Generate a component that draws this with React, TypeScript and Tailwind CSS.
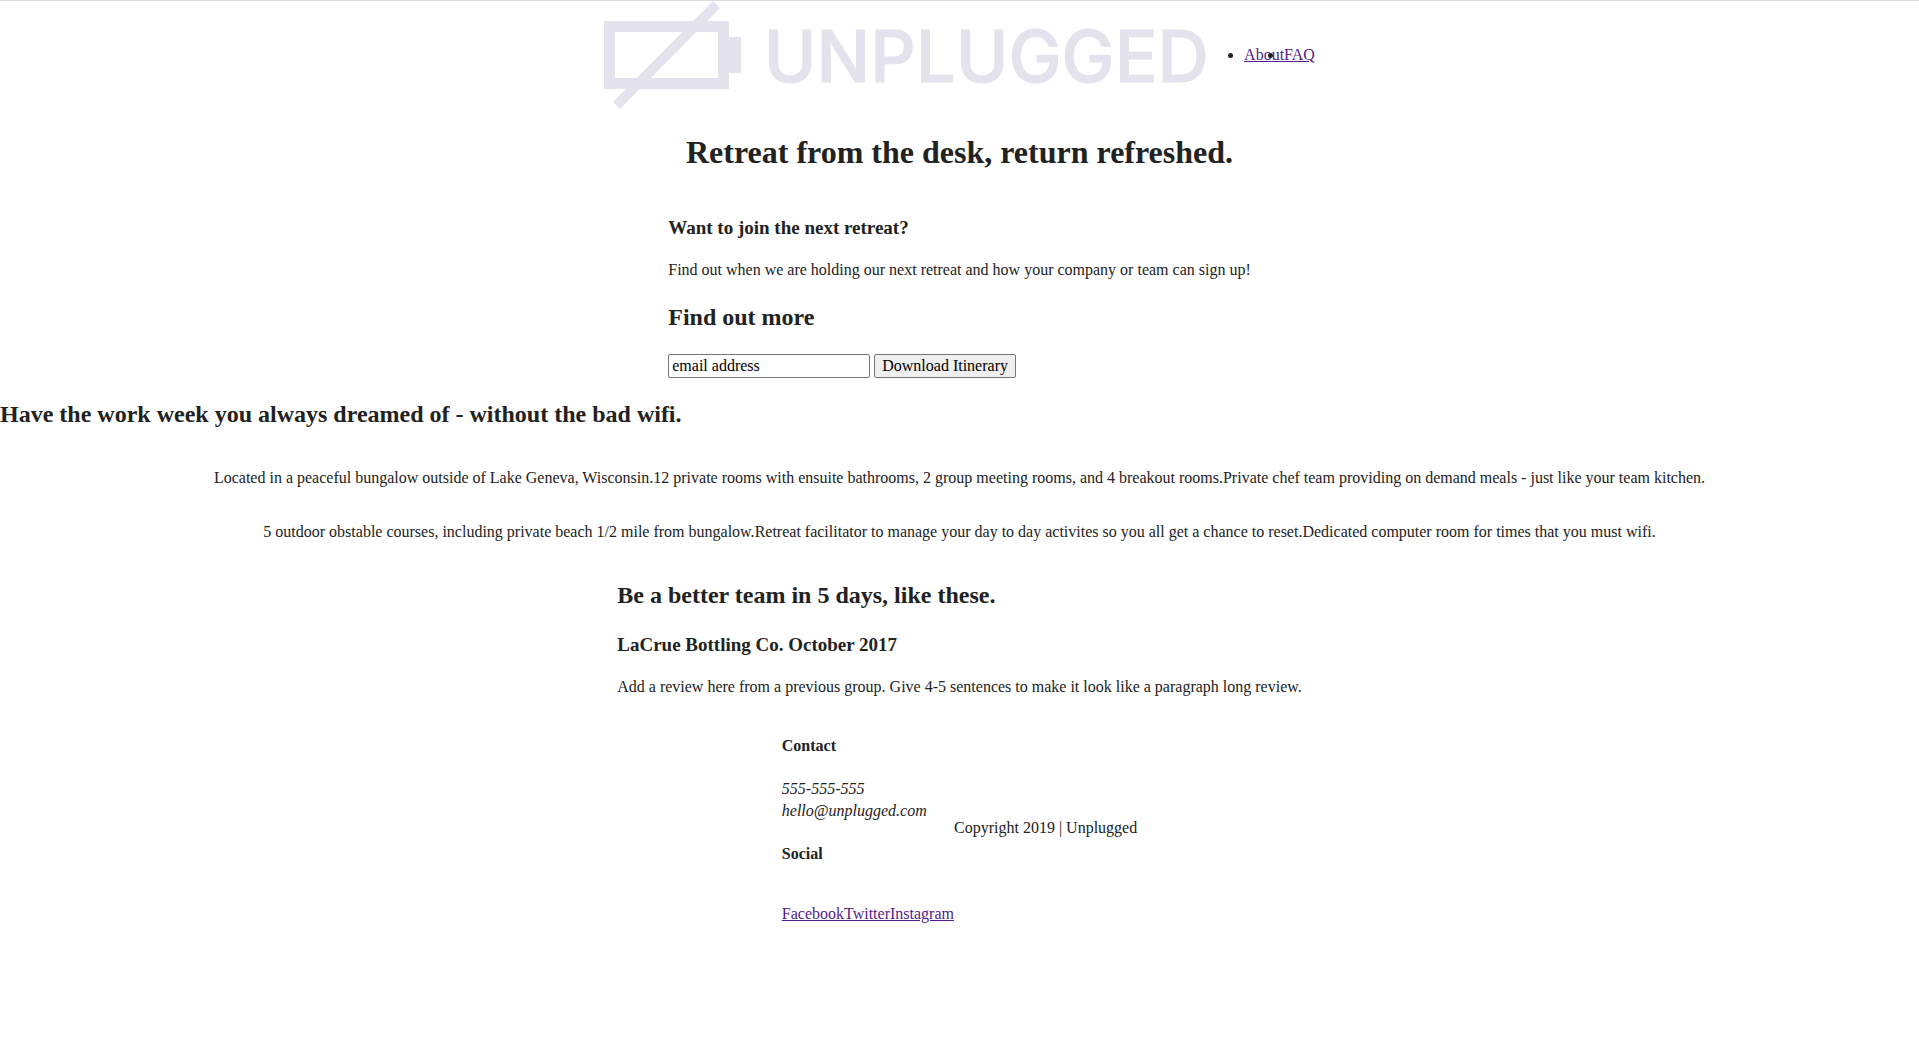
const navLinks = ["About", "FAQ"];

const featureRows = [
  [
    "Located in a peaceful bungalow outside of Lake Geneva, Wisconsin.",
    "12 private rooms with ensuite bathrooms, 2 group meeting rooms, and 4 breakout rooms.",
    "Private chef team providing on demand meals - just like your team kitchen.",
  ],
  [
    "5 outdoor obstable courses, including private beach 1/2 mile from bungalow.",
    "Retreat facilitator to manage your day to day activites so you all get a chance to reset.",
    "Dedicated computer room for times that you must wifi.",
  ],
];

const socialLinks = ["Facebook", "Twitter", "Instagram"];

function Logo() {
  return (
    <svg
      role="img"
      aria-label="Unplugged"
      viewBox="0 0 600 108"
      className="h-[108px] w-[600px] shrink-0 overflow-visible fill-[#e3e2ed]"
    >
      <path fillRule="evenodd" d="M0 20H125V36H137V72H125V88H0ZM11 31V77H114V31Z" />
      <path d="M109 0L116 7L16 108L9 101Z" />
      <text
        x="160"
        y="81"
        className="stroke-[#e3e2ed] stroke-1 font-['Inter',sans-serif] text-[71px] font-medium"
      >
        UNPLUGGED
      </text>
    </svg>
  );
}

function Header() {
  return (
    <header className="flex items-center justify-center">
      <Logo />
      <nav>
        <ul className="my-4 flex list-disc pl-10">
          {navLinks.map((label) => (
            <li key={label}>
              <a href="#" className="text-[#551a8b] underline">
                {label}
              </a>
            </li>
          ))}
        </ul>
      </nav>
    </header>
  );
}

function SignUp() {
  return (
    <section className="flex justify-center">
      <div>
        <h3 className="mt-[19px] text-[19px] leading-[26px] font-bold">
          Want to join the next retreat?
        </h3>
        <p className="mt-[18px]">
          Find out when we are holding our next retreat and how your company or team can sign up!
        </p>
        <h2 className="my-5 text-2xl leading-[33px] font-bold">Find out more</h2>
        <form className="flex gap-1 text-black" onSubmit={(e) => e.preventDefault()}>
          <input
            type="text"
            aria-label="email address"
            defaultValue="email address"
            className="h-6 w-[202px] rounded-xs border border-[#767676] bg-white px-[3px]"
          />
          <button
            type="submit"
            className="h-6 rounded-xs border border-[#767676] bg-[#efefef] px-[7px] leading-[22px]"
          >
            Download Itinerary
          </button>
        </form>
      </div>
    </section>
  );
}

function Features() {
  return (
    <section>
      <h2 className="my-5 text-2xl leading-[33px] font-bold">
        Have the work week you always dreamed of - without the bad wifi.
      </h2>
      <div className="flex flex-col gap-8 py-4">
        {featureRows.map((row) => (
          <ul key={row[0]} className="flex flex-wrap justify-center">
            {row.map((item) => (
              <li key={item}>{item}</li>
            ))}
          </ul>
        ))}
      </div>
    </section>
  );
}

function Reviews() {
  return (
    <section className="flex justify-center">
      <div>
        <h2 className="my-5 text-2xl leading-[33px] font-bold">
          Be a better team in 5 days, like these.
        </h2>
        <h3 className="mb-[18px] text-[19px] leading-[26px] font-bold">
          LaCrue Bottling Co. October 2017
        </h3>
        <p className="mb-4">
          Add a review here from a previous group. Give 4-5 sentences to make it look like a
          paragraph long review.
        </p>
      </div>
    </section>
  );
}

function Footer() {
  return (
    <footer className="flex items-center justify-center">
      <div>
        <h4 className="my-[21px] font-bold">Contact</h4>
        <address>
          555-555-555
          <br />
          hello@unplugged.com
        </address>
        <h4 className="mt-[21px] font-bold">Social</h4>
        <ul className="mt-[38px] mb-4 flex">
          {socialLinks.map((label) => (
            <li key={label}>
              <a href="#" className="text-[#551a8b] underline">
                {label}
              </a>
            </li>
          ))}
        </ul>
      </div>
      <p>Copyright 2019 | Unplugged</p>
    </footer>
  );
}

export default function App() {
  return (
    <div className="min-h-screen border-t border-[#dadae0] bg-white font-['Liberation_Serif',serif] text-base leading-[22px] text-[#222]">
      <Header />
      <main>
        <h1 className="my-[21px] text-center text-[32px] leading-[45px] font-bold">
          Retreat from the desk, return refreshed.
        </h1>
        <SignUp />
        <Features />
        <Reviews />
      </main>
      <Footer />
    </div>
  );
}
